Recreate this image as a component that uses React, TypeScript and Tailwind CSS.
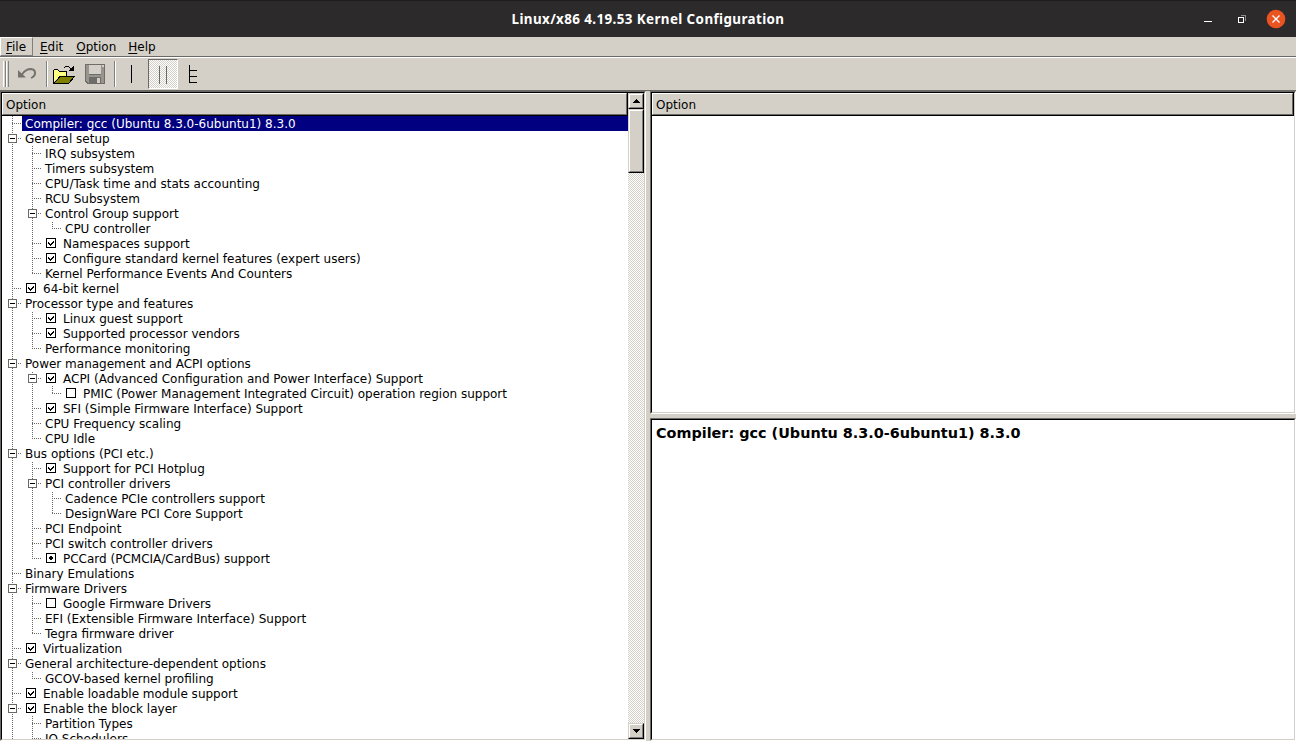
type Check = 'y' | 'n' | 'm';
type Item = { depth: number; label: string; check?: Check; open?: boolean };

const n = (depth: number, label: string, check?: Check, open?: boolean): Item => ({ depth, label, check, open });

const items: Item[] = [
  n(0, 'Compiler: gcc (Ubuntu 8.3.0-6ubuntu1) 8.3.0'),
  n(0, 'General setup', undefined, true),
  n(1, 'IRQ subsystem'),
  n(1, 'Timers subsystem'),
  n(1, 'CPU/Task time and stats accounting'),
  n(1, 'RCU Subsystem'),
  n(1, 'Control Group support', undefined, true),
  n(2, 'CPU controller'),
  n(1, 'Namespaces support', 'y'),
  n(1, 'Configure standard kernel features (expert users)', 'y'),
  n(1, 'Kernel Performance Events And Counters'),
  n(0, '64-bit kernel', 'y'),
  n(0, 'Processor type and features', undefined, true),
  n(1, 'Linux guest support', 'y'),
  n(1, 'Supported processor vendors', 'y'),
  n(1, 'Performance monitoring'),
  n(0, 'Power management and ACPI options', undefined, true),
  n(1, 'ACPI (Advanced Configuration and Power Interface) Support', 'y', true),
  n(2, 'PMIC (Power Management Integrated Circuit) operation region support', 'n'),
  n(1, 'SFI (Simple Firmware Interface) Support', 'y'),
  n(1, 'CPU Frequency scaling'),
  n(1, 'CPU Idle'),
  n(0, 'Bus options (PCI etc.)', undefined, true),
  n(1, 'Support for PCI Hotplug', 'y'),
  n(1, 'PCI controller drivers', undefined, true),
  n(2, 'Cadence PCIe controllers support'),
  n(2, 'DesignWare PCI Core Support'),
  n(1, 'PCI Endpoint'),
  n(1, 'PCI switch controller drivers'),
  n(1, 'PCCard (PCMCIA/CardBus) support', 'm'),
  n(0, 'Binary Emulations'),
  n(0, 'Firmware Drivers', undefined, true),
  n(1, 'Google Firmware Drivers', 'n'),
  n(1, 'EFI (Extensible Firmware Interface) Support'),
  n(1, 'Tegra firmware driver'),
  n(0, 'Virtualization', 'y'),
  n(0, 'General architecture-dependent options', undefined, true),
  n(1, 'GCOV-based kernel profiling'),
  n(0, 'Enable loadable module support', 'y'),
  n(0, 'Enable the block layer', 'y', true),
  n(1, 'Partition Types'),
  n(1, 'IO Schedulers'),
];

// True when another row at the given depth follows before its parent's subtree ends.
function continues(index: number, depth: number) {
  if (depth === 0) return true;
  for (let i = index + 1; i < items.length; i++) {
    if (items[i].depth < depth) return false;
    if (items[i].depth === depth) return true;
  }
  return false;
}

function Branches({ index }: { index: number }) {
  const { depth, open } = items[index];
  const width = 20 * (depth + 1);
  const cx = depth * 20 + 10;
  const phase = index % 2;
  const levels = Array.from({ length: depth + 1 }, (_, d) => d);
  return (
    <svg width={width} height={15} className="shrink-0" shapeRendering="crispEdges" fill="none" stroke="#6b6966">
      {levels.map((d) => {
        const more = continues(index, d);
        if (d < depth && !more) return null;
        return (
          <path
            key={d}
            d={`M${d * 20 + 10.5} 0V${more ? 15 : 8}`}
            strokeDasharray="1 1"
            strokeDashoffset={phase}
          />
        );
      })}
      <path d={`M${cx} 7.5H${cx + 10}`} strokeDasharray="1 1" />
      {open && (
        <>
          <rect x={cx - 3.5} y={3.5} width={8} height={8} fill="white" />
          <path d={`M${cx - 2} 7.5H${cx + 3}`} stroke="black" />
        </>
      )}
    </svg>
  );
}

function CheckMark({ state }: { state: Check }) {
  return (
    <svg width={10} height={10} className="mb-[1px] ml-1 mr-[5px] shrink-0" shapeRendering="crispEdges">
      <rect x={0.5} y={0.5} width={9} height={9} fill="white" stroke="black" />
      {state === 'y' && (
        <path d="M2 4h1v2h-1zM3 5h1v2h-1zM4 6h1v2h-1zM5 5h1v2h-1zM6 4h1v2h-1zM7 3h1v2h-1z" />
      )}
      {state === 'm' && <path d="M4 3h2v1h1v2h-1v1h-2v-1h-1v-2h1z" />}
    </svg>
  );
}

function Row({ index }: { index: number }) {
  const { label, check } = items[index];
  return (
    <div className="flex h-[15px] shrink-0 items-center">
      <Branches index={index} />
      <div
        className={
          index === 0
            ? 'flex h-[15px] flex-1 items-center bg-[#000080] text-white'
            : 'flex h-[15px] flex-1 items-center'
        }
      >
        {check && <CheckMark state={check} />}
        <span className={check ? 'mt-[2px] pl-[2px]' : 'mt-[2px] pl-[3px]'}>{label}</span>
      </div>
    </div>
  );
}

function Header({ className }: { className: string }) {
  return (
    <div className={`${className} h-[23px] shrink-0 border-b border-r border-black`}>
      <div className="flex h-[22px] items-center border border-b-[#6b6966] border-l-white border-r-[#6b6966] border-t-white bg-[#d4d0c8] pl-[3px]">
        <span className="mt-[2px]">Option</span>
      </div>
    </div>
  );
}

function ScrollButton({ down }: { down?: boolean }) {
  return (
    <div className="h-4 shrink-0 border border-b-black border-l-[#d4d0c8] border-r-black border-t-[#d4d0c8]">
      <div className="flex h-[14px] items-center justify-center border border-b-[#808080] border-l-white border-r-[#808080] border-t-white bg-[#d4d0c8]">
        <svg width={7} height={4} shapeRendering="crispEdges" className={down ? 'rotate-180' : ''}>
          <path d="M3 0h1v1h1v1h1v1h1v1h-7v-1h1v-1h1v-1h1z" />
        </svg>
      </div>
    </div>
  );
}

function Separator() {
  return <div className="h-[26px] w-[2px] shrink-0 border-l border-r border-l-[#808080] border-r-white" />;
}

const dither =
  'bg-[repeating-conic-gradient(#d4d0c8_0_25%,#ffffff_0_50%)] bg-[length:2px_2px]';

function Toolbar() {
  return (
    <div className="flex h-[34px] shrink-0 items-center border-b border-t border-b-[#6b6966] border-t-white pl-[3px]">
      <div className="flex">
        <div className="h-[26px] w-[3px] border-l border-r border-l-white border-r-[#808080]" />
        <div className="h-[26px] w-[3px] border-l border-r border-l-white border-r-[#808080]" />
      </div>
      <svg width={20} height={16} className="ml-[9px] shrink-0" fill="none" stroke="#75726d">
        <path d="M4 8.500C7 4 10 3 13 3C18 3.500 18.500 9 14 11.500L13 12" strokeWidth={1.9} />
        <path d="M0 4V11.500H8Z" fill="#75726d" stroke="none" />
      </svg>
      <div className="ml-2"><Separator /></div>
      <svg width={24} height={20} className="ml-[4px] mt-[2px] shrink-0" shapeRendering="crispEdges">
        <path d="M1 6h1v-1h5v1h1v1h7v5h-9l-5 6z" fill="#ffff80" />
        <path d="M1 5h1v13h-1zM2 4h4v1h-4zM6 5h1v1h-1zM7 6h8v1h-8zM14 7h1v4h-1z" />
        <path d="M8 11.500H22.500L16.500 18.500H2z" fill="#808000" stroke="black" />
        <path d="M12 2h1v1h-1zM13 1h4v1h-4zM17 2h1v1h-1zM18 3h1v1h-1zM21 1h1v5h-5v-1h1v-1h1v-1h1v-1h1z" />
      </svg>
      <svg width={20} height={20} className="ml-[9px] shrink-0" shapeRendering="crispEdges">
        <path d="M0 0h20v20h-18l-2-2z" fill="#6f6d69" />
        <path d="M1 1h3v10h12v-10h3v18h-16l-2-2z" fill="#98958f" />
        <path d="M4 1h12v9h-12z" fill="#d4d0c8" />
        <path d="M4 13h12v6h-12z" fill="#6f6d69" />
        <path d="M12 14h3v5h-3zM17 1h2v2h-2z" fill="#d4d0c8" />
      </svg>
      <div className="ml-[9px]"><Separator /></div>
      <svg width={30} height={30} className="shrink-0" shapeRendering="crispEdges">
        <path d="M15 6h1v18h-1z" />
      </svg>
      <div className={`${dither} ml-[2px] flex h-[30px] w-[30px] shrink-0 border border-b-white border-l-[#6b6966] border-r-white border-t-[#6b6966]`}>
        <svg width={28} height={28} shapeRendering="crispEdges">
          <path d="M10 6h1v18h-1zM17 6h1v18h-1z" fill="#6b6966" />
        </svg>
      </div>
      <svg width={30} height={30} className="shrink-0" shapeRendering="crispEdges">
        <path d="M11 6h1v18h-1zM12 11h7v1h-7zM12 17h7v1h-7zM12 23h7v1h-7z" />
      </svg>
    </div>
  );
}

function TitleBar() {
  return (
    <div className="flex h-[37px] shrink-0 items-center border-t border-[#1f1d1e] bg-[#2c2a2b]">
      <div className="w-[120px]" />
      <div className="flex-1 text-center font-['Noto_Sans'] text-[13.4px] font-bold tracking-[0.4px] text-white">
        Linux/x86 4.19.53 Kernel Configuration
      </div>
      <div className="flex w-[120px] justify-end">
        <svg width={94} height={36} fill="none">
          <path d="M2 20.500h8" stroke="white" shapeRendering="crispEdges" />
          <path d="M38.500 14.500h5v5" stroke="#8b8989" shapeRendering="crispEdges" />
          <path d="M36.500 16.500h5v5h-5z" stroke="white" fill="#2c2a2b" shapeRendering="crispEdges" />
          <circle cx={74} cy={18} r={9.3} fill="#e95420" />
          <path d="M70.500 14.500l7 7M77.500 14.500l-7 7" stroke="white" strokeWidth={1.4} />
        </svg>
      </div>
    </div>
  );
}

function MenuBar() {
  const menus = ['File', 'Edit', 'Option', 'Help'];
  return (
    <div className="flex h-5 shrink-0 border-b border-[#6b6966]">
      {menus.map((m, i) => (
        <div
          key={m}
          className={
            i === 0
              ? 'mr-[1px] flex h-[19px] w-[33px] items-center border border-b-[#808080] border-l-white border-r-[#808080] border-t-white pl-[5px]'
              : i === 1
                ? 'flex h-[19px] items-center pl-[6px] pr-[7px]'
                : 'flex h-[19px] items-center px-[6px]'
          }
        >
          <span className="mt-[2px]"><span className="underline underline-offset-2">{m[0]}</span>{m.slice(1)}</span>
        </div>
      ))}
    </div>
  );
}

export default function App() {
  return (
    <div className="flex h-[741px] w-[1296px] flex-col overflow-hidden whitespace-nowrap bg-[#d4d0c8] font-['DejaVu_Sans',sans-serif] text-[12px] leading-[15px] text-black">
      <TitleBar />
      <MenuBar />
      <Toolbar />
      <div className="flex min-h-0 flex-1">
        <div className="flex w-[646px] border border-b-white border-l-[#6b6966] border-r-white border-t-[#6b6966]">
          <div className="flex min-w-0 flex-1 border border-b-[#d4d0c8] border-l-black border-r-[#d4d0c8] border-t-black bg-white">
            <div className="flex min-w-0 flex-1 flex-col overflow-hidden">
              <Header className="w-full" />
              <div className="flex min-h-0 flex-1 flex-col overflow-hidden">
                {items.map((_, i) => <Row key={i} index={i} />)}
              </div>
            </div>
            <div className={`${dither} flex w-4 shrink-0 flex-col`}>
              <ScrollButton />
              <div className="h-16 border border-b-black border-l-[#d4d0c8] border-r-black border-t-[#d4d0c8]">
                <div className="h-full border border-b-[#808080] border-l-white border-r-[#808080] border-t-white bg-[#d4d0c8]" />
              </div>
              <div className="flex-1" />
              <ScrollButton down />
            </div>
          </div>
        </div>
        <div className="ml-1 flex flex-1 flex-col gap-1">
          <div className="h-[323px] border border-b-white border-l-[#6b6966] border-r-white border-t-[#6b6966]">
            <div className="h-full border border-b-[#d4d0c8] border-l-black border-r-[#d4d0c8] border-t-black bg-white">
              <Header className="w-full" />
            </div>
          </div>
          <div className="min-h-0 flex-1 border border-b-white border-l-[#6b6966] border-r-white border-t-[#6b6966]">
            <div className="h-full border border-b-[#d4d0c8] border-l-black border-r-[#d4d0c8] border-t-black bg-white pl-1 pt-1 text-[14.4px] font-bold leading-[18px]">
              Compiler: gcc (Ubuntu 8.3.0-6ubuntu1) 8.3.0
            </div>
          </div>
        </div>
      </div>
    </div>
  );
}
